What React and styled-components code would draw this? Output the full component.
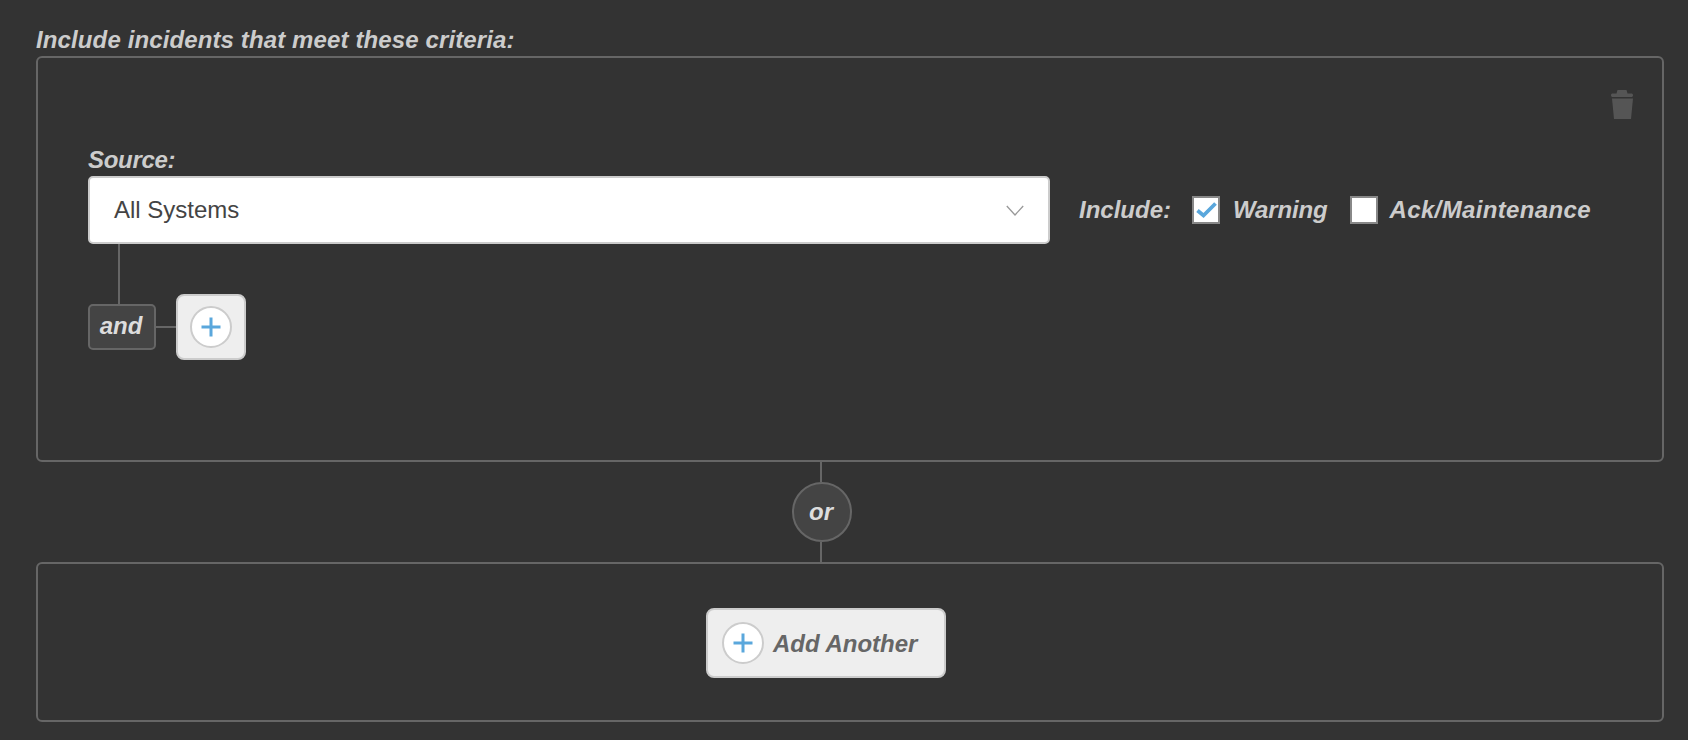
import React from "react";
import styled, { createGlobalStyle } from "styled-components";

const GlobalStyle = createGlobalStyle`
  html, body {
    margin: 0;
    background: #333;
  }
  body {
    font-family: "Liberation Sans", Arial, sans-serif;
  }
  * {
    box-sizing: border-box;
  }
`;

const Page = styled.div`
  width: 1688px;
  height: 740px;
  overflow: hidden;
  padding: 26px 24px 0 36px;
  background: #333;
`;

const Label = styled.div`
  font-size: 24px;
  line-height: 28px;
  font-weight: 700;
  font-style: italic;
  letter-spacing: ${(props) => props.spacing || 0}px;
  color: #ccc;
  margin-bottom: 2px;
`;

const Panel = styled.div`
  height: ${(props) => props.height}px;
  border: 2px solid #666;
  border-radius: 6px;
`;

const TrashRow = styled.div`
  display: flex;
  justify-content: flex-end;
  padding: 32px 28px 27px 0;
  color: #555;
`;

const Criteria = styled.div`
  padding-left: 50px;
`;

const SourceRow = styled.div`
  display: flex;
  align-items: center;
`;

const Select = styled.div`
  width: 962px;
  height: 68px;
  display: flex;
  align-items: center;
  justify-content: space-between;
  padding: 0 24px;
  background: #fff;
  border: 2px solid #ccc;
  border-radius: 5px;
  font-size: 24px;
  color: #444;
`;

const IncludeText = styled.span`
  font-size: 24px;
  font-weight: 700;
  font-style: italic;
  letter-spacing: ${(props) => props.spacing || 0}px;
  color: #ccc;
  margin-left: ${(props) => props.left}px;
`;

const Checkbox = styled.span`
  width: 28px;
  height: 28px;
  display: flex;
  margin-left: ${(props) => props.left}px;
  background: #fff;
  border: 2px solid #888;
`;

const AndRow = styled.div`
  display: flex;
  align-items: flex-end;
`;

const AndStack = styled.div`
  display: flex;
  flex-direction: column;
`;

const VLine = styled.div`
  width: 2px;
  height: ${(props) => props.height}px;
  margin-left: ${(props) => props.left}px;
  background: #666;
`;

const HLine = styled.div`
  width: 20px;
  height: 2px;
  margin-bottom: 22px;
  background: #666;
`;

const AndBox = styled.div`
  width: 68px;
  height: 46px;
  display: flex;
  align-items: center;
  justify-content: center;
  padding: 0 2px 3px 0;
  background: #444;
  border: 2px solid #666;
  border-radius: 5px;
  font-size: 24px;
  font-weight: 700;
  font-style: italic;
  color: #ddd;
`;

const PlusButton = styled.div`
  width: 70px;
  height: 66px;
  margin-bottom: -10px;
  display: flex;
  align-items: center;
  justify-content: center;
  background: #eee;
  border: 2px solid #ccc;
  border-radius: 8px;
`;

const PlusCircle = styled.span`
  width: 42px;
  height: 42px;
  flex: none;
  display: flex;
  align-items: center;
  justify-content: center;
  background: #fff;
  border: 2px solid #ccc;
  border-radius: 50%;
`;

const OrConnector = styled.div`
  display: flex;
  flex-direction: column;
  align-items: flex-start;
  padding-left: 756px;
`;

const OrCircle = styled.div`
  width: 60px;
  height: 60px;
  display: flex;
  align-items: center;
  justify-content: center;
  padding-right: 2px;
  background: #444;
  border: 2px solid #666;
  border-radius: 50%;
  font-size: 24px;
  font-weight: 700;
  font-style: italic;
  color: #ddd;
`;

const AddAnother = styled.div`
  width: 240px;
  height: 70px;
  margin: 44px 0 0 668px;
  display: flex;
  align-items: center;
  gap: 9px;
  padding-left: 14px;
  background: #eee;
  border: 2px solid #ccc;
  border-radius: 8px;
  font-size: 24px;
  font-weight: 700;
  font-style: italic;
  color: #666;
`;

const AddText = styled.span`
  padding-top: 2px;
`;

const Plus = () => (
  <svg width="20" height="20" viewBox="0 0 20 20">
    <path d="M10 0.500v19M0.500 10h19" stroke="#5aa7dc" strokeWidth="3" fill="none" />
  </svg>
);

const Trash = () => (
  <svg width="24" height="29" viewBox="0 0 24 29" fill="currentColor">
    <path d="M7.500 0h9l1 3.500H22a2 2 0 0 1 0 3.500H2a2 2 0 0 1 0-3.500h4.500z" />
    <path d="M2 8.500h21l-2 20.500H4z" />
  </svg>
);

const Chevron = () => (
  <svg width="18" height="11" viewBox="0 0 18 11">
    <path d="M0.800 1l8.200 9 8.200-9" stroke="#999" strokeWidth="1.300" fill="none" />
  </svg>
);

const Check = () => (
  <svg width="24" height="24" viewBox="0 0 24 24">
    <path d="M3.500 12.500l6 5L21.500 5.500" stroke="#5aa7dc" strokeWidth="3.800" fill="none" />
  </svg>
);

export default function App() {
  return (
    <Page>
      <GlobalStyle />
      <Label spacing={0.12}>Include incidents that meet these criteria:</Label>
      <Panel height={406}>
        <TrashRow>
          <Trash />
        </TrashRow>
        <Criteria>
          <Label spacing={-0.3}>Source:</Label>
          <SourceRow>
            <Select>
              All Systems
              <Chevron />
            </Select>
            <IncludeText left={29}>Include:</IncludeText>
            <Checkbox left={21}>
              <Check />
            </Checkbox>
            <IncludeText left={13} spacing={-0.15}>Warning</IncludeText>
            <Checkbox left={22} />
            <IncludeText left={12} spacing={0.35}>Ack/Maintenance</IncludeText>
          </SourceRow>
          <AndRow>
            <AndStack>
              <VLine height={60} left={30} />
              <AndBox>and</AndBox>
            </AndStack>
            <HLine />
            <PlusButton>
              <PlusCircle>
                <Plus />
              </PlusCircle>
            </PlusButton>
          </AndRow>
        </Criteria>
      </Panel>
      <OrConnector>
        <VLine height={20} left={28} />
        <OrCircle>or</OrCircle>
        <VLine height={20} left={28} />
      </OrConnector>
      <Panel height={160}>
        <AddAnother>
          <PlusCircle>
            <Plus />
          </PlusCircle>
          <AddText>Add Another</AddText>
        </AddAnother>
      </Panel>
    </Page>
  );
}
